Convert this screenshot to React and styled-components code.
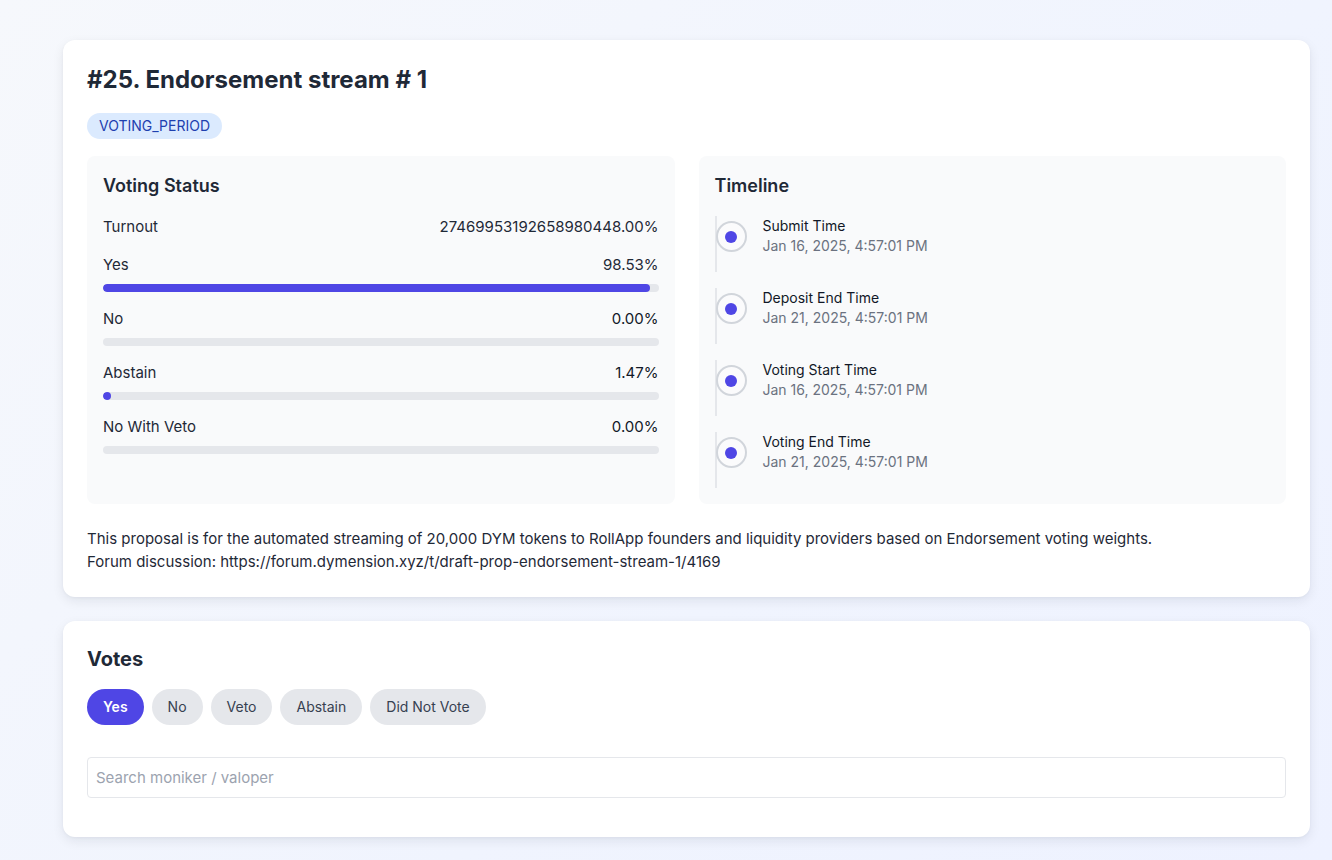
import styled, { createGlobalStyle } from "styled-components";

const GlobalStyle = createGlobalStyle`
  * {
    box-sizing: border-box;
  }

  body {
    margin: 0;
    font-family: Inter, "Noto Sans", "Liberation Sans", sans-serif;
    color: #1f2937;
    background: linear-gradient(135deg, #f6f8fc 0%, #f0f4fe 60%, #eef2ff 100%);
    min-height: 100vh;
  }
`;

const Page = styled.main`
  min-height: 100vh;
  padding: 40px 22px 24px 63px;
  display: flex;
  flex-direction: column;
  gap: 24px;
`;

const Card = styled.section`
  background: #fff;
  border-radius: 12px;
  padding: 24px;
  box-shadow: 0 4px 12px rgba(15, 23, 42, 0.08), 0 1px 3px rgba(15, 23, 42, 0.04);
`;

const Title = styled.h1`
  margin: 0 0 17px;
  font-size: 24px;
  line-height: 32px;
  font-weight: 700;
  color: #1f2937;
`;

const Badge = styled.span`
  display: inline-block;
  padding: 0 12px;
  height: 26px;
  line-height: 26px;
  border-radius: 999px;
  background: #dbeafe;
  color: #1e40af;
  font-size: 14px;
`;

const Grid = styled.div`
  margin-top: 17px;
  display: grid;
  grid-template-columns: 1fr 1fr;
  gap: 24px;
`;

const Panel = styled.div`
  background: #f9fafb;
  border-radius: 8px;
  padding: 16px;
`;

const PanelTitle = styled.h2`
  margin: 0 0 16px;
  font-size: 18px;
  line-height: 28px;
  font-weight: 600;
  color: #1f2937;
`;

const StatList = styled.div`
  display: flex;
  flex-direction: column;
  gap: 16px;
`;

const StatRow = styled.div`
  display: flex;
  justify-content: space-between;
  font-size: 15px;
  line-height: 22px;
  color: #1f2937;
`;

const StatValue = styled.span`
  color: ${(p) => (p.$strong ? "#111827" : "#1f2937")};
`;

const Track = styled.div`
  margin-top: 8px;
  height: 8px;
  border-radius: 999px;
  background: #e5e7eb;
  overflow: hidden;
`;

const Fill = styled.div`
  height: 100%;
  border-radius: 999px;
  background: #4f46e5;
`;

const Timeline = styled.ol`
  list-style: none;
  margin: 0;
  padding: 0;
  display: flex;
  flex-direction: column;
  gap: 16px;
`;

const Step = styled.li`
  display: flex;
  align-items: flex-start;
  border-left: 2px solid #e5e7eb;
  padding-bottom: 16px;
`;

const Dot = styled.span`
  flex: none;
  width: 31px;
  height: 31px;
  margin: 5px 0 0 -1px;
  border-radius: 50%;
  border: 2px solid #d1d5db;
  background: #fbfbfc;
  display: flex;
  align-items: center;
  justify-content: center;

  &::after {
    content: "";
    width: 12px;
    height: 12px;
    border-radius: 50%;
    background: #4f46e5;
  }
`;

const StepText = styled.div`
  margin-left: 16px;
  font-size: 14px;
  line-height: 20px;
`;

const StepLabel = styled.div`
  color: #111827;
`;

const StepDate = styled.div`
  color: #6b7280;
`;

const Description = styled.p`
  margin: 24px 0 0;
  font-size: 15px;
  line-height: 22.5px;
  color: #1f2937;
`;

const VotesTitle = styled.h2`
  margin: 0 0 16px;
  font-size: 20px;
  line-height: 28px;
  font-weight: 700;
  color: #1f2937;
`;

const Filters = styled.div`
  display: flex;
  gap: 8px;
  margin-bottom: 32px;
`;

const FilterButton = styled.button`
  border: none;
  border-radius: 999px;
  padding: 8px 16px;
  font-family: inherit;
  font-size: 14px;
  line-height: 20px;
  font-weight: ${(p) => (p.$active ? 600 : 400)};
  background: ${(p) => (p.$active ? "#4f46e5" : "#e5e7eb")};
  color: ${(p) => (p.$active ? "#fff" : "#374151")};
  cursor: pointer;
`;

const Search = styled.input`
  display: block;
  width: 100%;
  height: 41px;
  margin-bottom: 15px;
  padding: 0 8px;
  border: 1px solid #e5e7eb;
  border-radius: 4px;
  font-family: inherit;
  font-size: 15px;
  color: #1f2937;
  background: #fff;
  outline: none;

  &::placeholder {
    color: #9ca3af;
  }
`;

const votes = [
  { label: "Yes", value: "98.53%", pct: 98.53 },
  { label: "No", value: "0.00%", pct: 0 },
  { label: "Abstain", value: "1.47%", pct: 1.47 },
  { label: "No With Veto", value: "0.00%", pct: 0 },
];

const steps = [
  { label: "Submit Time", date: "Jan 16, 2025, 4:57:01 PM" },
  { label: "Deposit End Time", date: "Jan 21, 2025, 4:57:01 PM" },
  { label: "Voting Start Time", date: "Jan 16, 2025, 4:57:01 PM" },
  { label: "Voting End Time", date: "Jan 21, 2025, 4:57:01 PM" },
];

const filters = ["Yes", "No", "Veto", "Abstain", "Did Not Vote"];

export default function App() {
  return (
    <>
      <GlobalStyle />
      <Page>
        <Card>
          <Title>#25. Endorsement stream # 1</Title>
          <Badge>VOTING_PERIOD</Badge>

          <Grid>
            <Panel>
              <PanelTitle>Voting Status</PanelTitle>
              <StatList>
                <StatRow>
                  <span>Turnout</span>
                  <StatValue>27469953192658980448.00%</StatValue>
                </StatRow>
                {votes.map((v) => (
                  <div key={v.label}>
                    <StatRow>
                      <span>{v.label}</span>
                      <StatValue $strong={v.pct < 50}>{v.value}</StatValue>
                    </StatRow>
                    <Track>
                      <Fill style={{ width: `${v.pct}%` }} />
                    </Track>
                  </div>
                ))}
              </StatList>
            </Panel>

            <Panel>
              <PanelTitle>Timeline</PanelTitle>
              <Timeline>
                {steps.map((s) => (
                  <Step key={s.label}>
                    <Dot />
                    <StepText>
                      <StepLabel>{s.label}</StepLabel>
                      <StepDate>{s.date}</StepDate>
                    </StepText>
                  </Step>
                ))}
              </Timeline>
            </Panel>
          </Grid>

          <Description>
            This proposal is for the automated streaming of 20,000 DYM tokens to RollApp founders and
            liquidity providers based on Endorsement voting weights.
            <br />
            Forum discussion: https://forum.dymension.xyz/t/draft-prop-endorsement-stream-1/4169
          </Description>
        </Card>

        <Card>
          <VotesTitle>Votes</VotesTitle>
          <Filters>
            {filters.map((f, i) => (
              <FilterButton key={f} $active={i === 0}>
                {f}
              </FilterButton>
            ))}
          </Filters>
          <Search placeholder="Search moniker / valoper" />
        </Card>
      </Page>
    </>
  );
}
